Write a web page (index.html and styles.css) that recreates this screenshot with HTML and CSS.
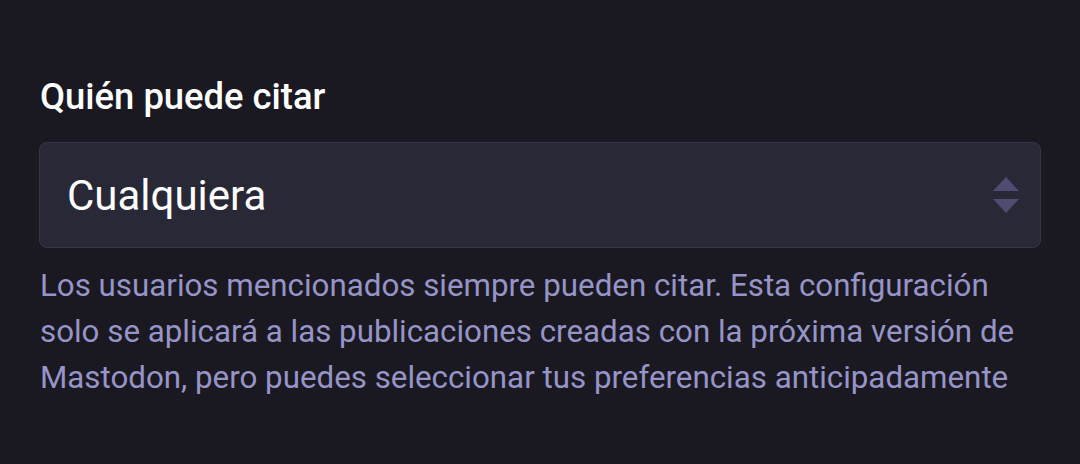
FILE: index.html
```html
<!DOCTYPE html>
<html lang="es">
<head>
    <meta charset="UTF-8">
    <meta name="viewport" content="width=device-width, initial-scale=1.0">
    <title>Quién puede citar</title>
    <link rel="stylesheet" href="styles.css">
</head>
<body>
    <div class="field">
        <label class="field-label" for="quotePolicy">Quién puede citar</label>
        <div class="select-wrap">
            <select id="quotePolicy" class="select">
                <option>Cualquiera</option>
                <option>Solo seguidores</option>
                <option>Solo yo</option>
            </select>
            <svg class="select-arrows" width="26" height="36" viewBox="0 0 26 36" aria-hidden="true">
                <path d="M13 0 L26 14 L0 14 Z" />
                <path d="M0 22 L26 22 L13 36 Z" />
            </svg>
        </div>
        <p class="field-hint">Los usuarios mencionados siempre pueden citar. Esta configuración solo se aplicará a las publicaciones creadas con la próxima versión de Mastodon, pero puedes seleccionar tus preferencias anticipadamente</p>
    </div>
</body>
</html>
```

FILE: styles.css
```css
body {
    margin: 0;
    background-color: #1a1921;
    font-family: Roboto, "Liberation Sans", sans-serif;
}
.field {
    padding: 75px 39px 0 39px;
}
.field-label {
    display: block;
    color: #ffffff;
    font-size: 36.4px;
    font-weight: 500;
    line-height: 44px;
    margin-bottom: 23px;
    padding-left: 1px;
}
.select-wrap {
    position: relative;
}
.select {
    display: block;
    width: 100%;
    height: 106px;
    box-sizing: border-box;
    padding: 0 80px 0 27px;
    font-family: inherit;
    font-size: 42px;
    color: #ffffff;
    background-color: #292837;
    border: 1px solid #363548;
    border-radius: 8px;
    appearance: none;
    -webkit-appearance: none;
    outline: none;
}
.select-arrows {
    position: absolute;
    right: 22px;
    top: 35px;
    fill: #4f4c72;
    pointer-events: none;
}
.field-hint {
    margin: 15px 0 0 1px;
    color: #9794c8;
    font-size: 31.3px;
    line-height: 46px;
}
```
